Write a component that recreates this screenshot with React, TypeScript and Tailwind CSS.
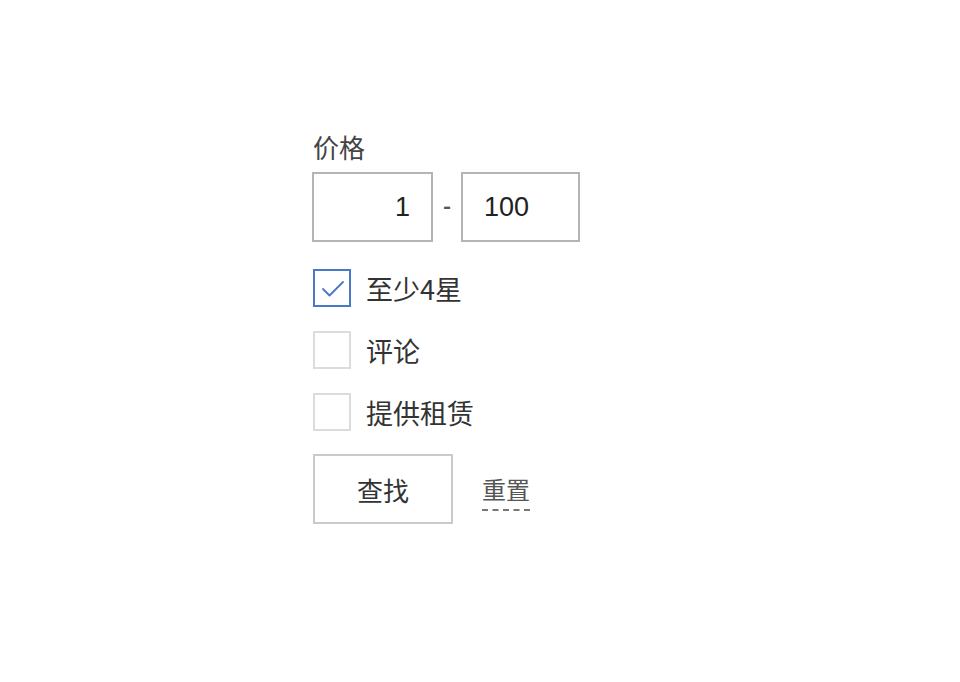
import { useState } from 'react'

const font = { fontFamily: '"Noto Sans CJK SC", "Liberation Sans", sans-serif' }

function Check({ label, defaultChecked = false }: { label: string; defaultChecked?: boolean }) {
  const [on, setOn] = useState(defaultChecked)
  return (
    <label className="flex items-center gap-[15px] cursor-pointer select-none">
      <span
        onClick={() => setOn(!on)}
        className={
          on
            ? 'flex items-center justify-center w-[38px] h-[38px] border-2 border-[#4a78c2] bg-white'
            : 'flex items-center justify-center w-[38px] h-[38px] border-2 border-[#dcdcdc] bg-white'
        }
      >
        {on && (
          <svg width="24" height="24" viewBox="0 0 24 24" fill="none" aria-hidden="true">
            <path d="M3 13l6.5 6.5L23 6" stroke="#4a78c2" strokeWidth="1.8" strokeLinecap="round" strokeLinejoin="round" />
          </svg>
        )}
      </span>
      <span className="text-[27px] leading-none text-[#333]">{label}</span>
    </label>
  )
}

export default function App() {
  const [min, setMin] = useState('1')
  const [max, setMax] = useState('100')

  return (
    <div className="min-h-screen bg-white" style={font}>
      <div className="pl-[312px] pt-[131px] flex flex-col items-start">
        {/* 价格 */}
        <div className="pl-px text-[26px] leading-[32px] text-[#444]">价格</div>

        <div className="mt-[9px] flex items-center">
          <input
            value={min}
            onChange={(e) => setMin(e.target.value)}
            className="w-[121px] h-[70px] border-2 border-[#b4b4b4] pr-[21px] text-right text-[27px] text-[#222] outline-none"
            style={{ fontFamily: '"Liberation Sans", sans-serif' }}
          />
          <span className="w-[28px] text-center text-[22px] font-bold text-[#555] -mt-[6px]">-</span>
          <input
            value={max}
            onChange={(e) => setMax(e.target.value)}
            className="w-[119px] h-[70px] border-2 border-[#b4b4b4] pl-[21px] text-[27px] text-[#222] outline-none"
            style={{ fontFamily: '"Liberation Sans", sans-serif' }}
          />
        </div>

        <div className="mt-[27px] pl-px flex flex-col gap-[24px]">
          <Check label="至少4星" defaultChecked />
          <Check label="评论" />
          <Check label="提供租赁" />
        </div>

        <div className="mt-[23px] pl-px flex items-center gap-[29px]">
          <button className="w-[140px] h-[70px] border-2 border-[#cacaca] bg-white text-[26px] text-[#333]">
            查找
          </button>
          <a
            href="#"
            className="text-[24px] leading-[30px] pb-[5px] text-[#555] border-b-2 border-dashed border-[#777] mt-[6px]"
          >
            重置
          </a>
        </div>
      </div>
    </div>
  )
}
